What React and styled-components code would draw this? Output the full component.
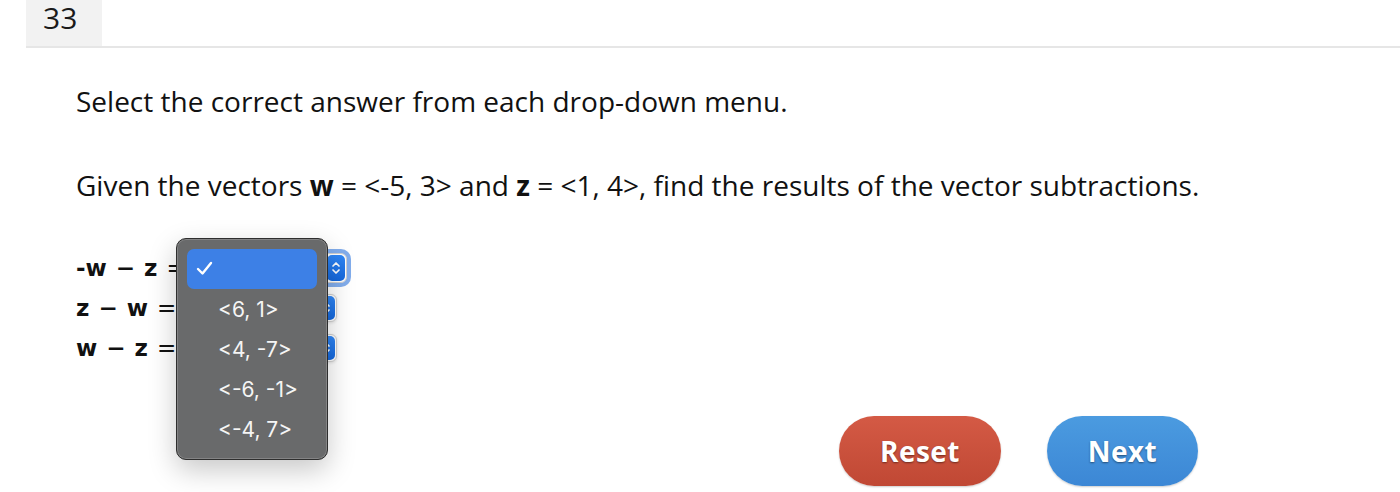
import styled, { createGlobalStyle } from 'styled-components'

const GlobalStyle = createGlobalStyle`
  html, body {
    margin: 0;
    padding: 0;
    background: #ffffff;
  }
  body {
    font-family: 'Open Sans', 'Noto Sans', sans-serif;
    color: #111;
  }
`

const questions = [
  { sign: '-', a: 'w', b: 'z', focused: true },
  { sign: '', a: 'z', b: 'w' },
  { sign: '', a: 'w', b: 'z' },
]

const options = ['<6, 1>', '<4, -7>', '<-6, -1>', '<-4, 7>']

function Chevrons() {
  return (
    <svg width="10" height="16" viewBox="0 0 10 16" fill="none">
      <path d="M2 6 L5 3 L8 6" stroke="#fff" strokeWidth="1.7" strokeLinecap="round" strokeLinejoin="round" />
      <path d="M2 10 L5 13 L8 10" stroke="#fff" strokeWidth="1.7" strokeLinecap="round" strokeLinejoin="round" />
    </svg>
  )
}

function Check() {
  return (
    <svg width="17" height="15" viewBox="0 0 17 15" fill="none">
      <path d="M2 8 L6.5 12.5 L15 2" stroke="#fff" strokeWidth="2.4" strokeLinecap="round" strokeLinejoin="round" />
    </svg>
  )
}

export default function App() {
  return (
    <Page>
      <GlobalStyle />
      <Header>
        <Number>33</Number>
      </Header>
      <Content>
        <Prompt>Select the correct answer from each drop-down menu.</Prompt>
        <Prompt $gap={46}>
          Given the vectors <b>w</b> = &lt;-5, 3&gt; and <b>z</b> = &lt;1, 4&gt;, find the results of the vector subtractions.
        </Prompt>
        <Rows>
          {questions.map((q, i) => (
            <Row key={i}>
              <Label>
                {q.sign}
                {q.a}
                <Minus>−</Minus>
                {q.b}
                <Equals>=</Equals>
              </Label>
              <Select $focused={q.focused}>
                <Arrow>
                  <Chevrons />
                </Arrow>
              </Select>
            </Row>
          ))}
          <Menu>
            <Item $active>
              <CheckSlot>
                <Check />
              </CheckSlot>
            </Item>
            {options.map((o) => (
              <Item key={o}>{o}</Item>
            ))}
          </Menu>
        </Rows>
        <Footer>
          <Button $color="reset">Reset</Button>
          <Button $color="next">Next</Button>
        </Footer>
      </Content>
    </Page>
  )
}

const Page = styled.div`
  width: 1400px;
  height: 492px;
  overflow: hidden;
`

const Header = styled.div`
  margin-left: 26px;
  height: 46px;
  border-bottom: 2px solid #e6e6e6;
  display: flex;
`

const Number = styled.div`
  width: 76px;
  height: 46px;
  background: #f2f2f2;
  display: flex;
  align-items: flex-start;
  font-size: 30px;
  line-height: 36px;
  padding-left: 17px;
  box-sizing: border-box;
  color: #1a1a1a;
`

const Content = styled.div`
  padding-left: 76px;
`

const Prompt = styled.p`
  margin: ${(p) => p.$gap || 34}px 0 0;
  font-size: 28px;
  line-height: 38px;
  color: #111;

  b {
    font-weight: 700;
  }
`

const Rows = styled.div`
  position: relative;
  margin-top: 44px;
  display: flex;
  flex-direction: column;
`

const Row = styled.div`
  display: flex;
  align-items: center;
  height: 40px;
`

const Label = styled.div`
  width: 104px;
  display: flex;
  align-items: center;
  font-family: 'DejaVu Sans', Verdana, sans-serif;
  font-size: 23px;
  font-weight: 700;
  color: #111;
  white-space: nowrap;
`

const Minus = styled.span`
  margin: 0 9px;
`

const Equals = styled.span`
  font-weight: 400;
  margin-left: 9px;
`

const Select = styled.div`
  width: ${(p) => (p.$focused ? 167 : 157)}px;
  height: ${(p) => (p.$focused ? 30 : 28)}px;
  border-radius: 6px;
  background: #fff;
  border: 1px solid #d0d0d0;
  display: flex;
  justify-content: flex-end;
  align-items: center;
  padding: 1px;
  box-sizing: border-box;
  box-shadow: ${(p) =>
    p.$focused ? '0 0 0 4px rgba(88, 145, 230, 0.75)' : '0 1px 3px rgba(0,0,0,0.12)'};
`

const Arrow = styled.div`
  width: 18px;
  height: 100%;
  border-radius: 5px;
  background: linear-gradient(#2f86f5, #1467dc);
  display: flex;
  align-items: center;
  justify-content: center;
`

const Menu = styled.div`
  position: absolute;
  left: 100px;
  top: -10px;
  width: 152px;
  padding: 10px 10px;
  box-sizing: border-box;
  background: #696a6b;
  border: 1px solid #2e2e2e;
  border-radius: 10px;
  box-shadow: inset 0 0 0 1px rgba(255, 255, 255, 0.18), 0 10px 28px rgba(0, 0, 0, 0.22);
  display: flex;
  flex-direction: column;
`

const Item = styled.div`
  height: 40px;
  padding-left: 31px;
  border-radius: 7px;
  display: flex;
  align-items: center;
  font-family: Inter, 'Noto Sans', sans-serif;
  font-size: 21px;
  color: #f5f5f5;
  background: ${(p) => (p.$active ? '#3d80e6' : 'transparent')};
  position: relative;
`

const CheckSlot = styled.span`
  position: absolute;
  left: 9px;
  top: 12px;
  display: flex;
`

const Footer = styled.div`
  display: flex;
  justify-content: flex-end;
  gap: 46px;
  padding-right: 202px;
  margin-top: 48px;
`

const Button = styled.button`
  height: 70px;
  padding: 0 41px;
  border: none;
  border-radius: 35px;
  font-family: 'Open Sans', sans-serif;
  font-size: 28px;
  font-weight: 700;
  color: #fff;
  letter-spacing: 0.4px;
  text-shadow: 0 1px 2px rgba(0, 0, 0, 0.45);
  background: ${(p) =>
    p.$color === 'reset'
      ? 'linear-gradient(#d45a45, #c04834)'
      : 'linear-gradient(#4b9be0, #3c87d5)'};
  box-shadow: 0 1px 2px rgba(0, 0, 0, 0.2);
`
